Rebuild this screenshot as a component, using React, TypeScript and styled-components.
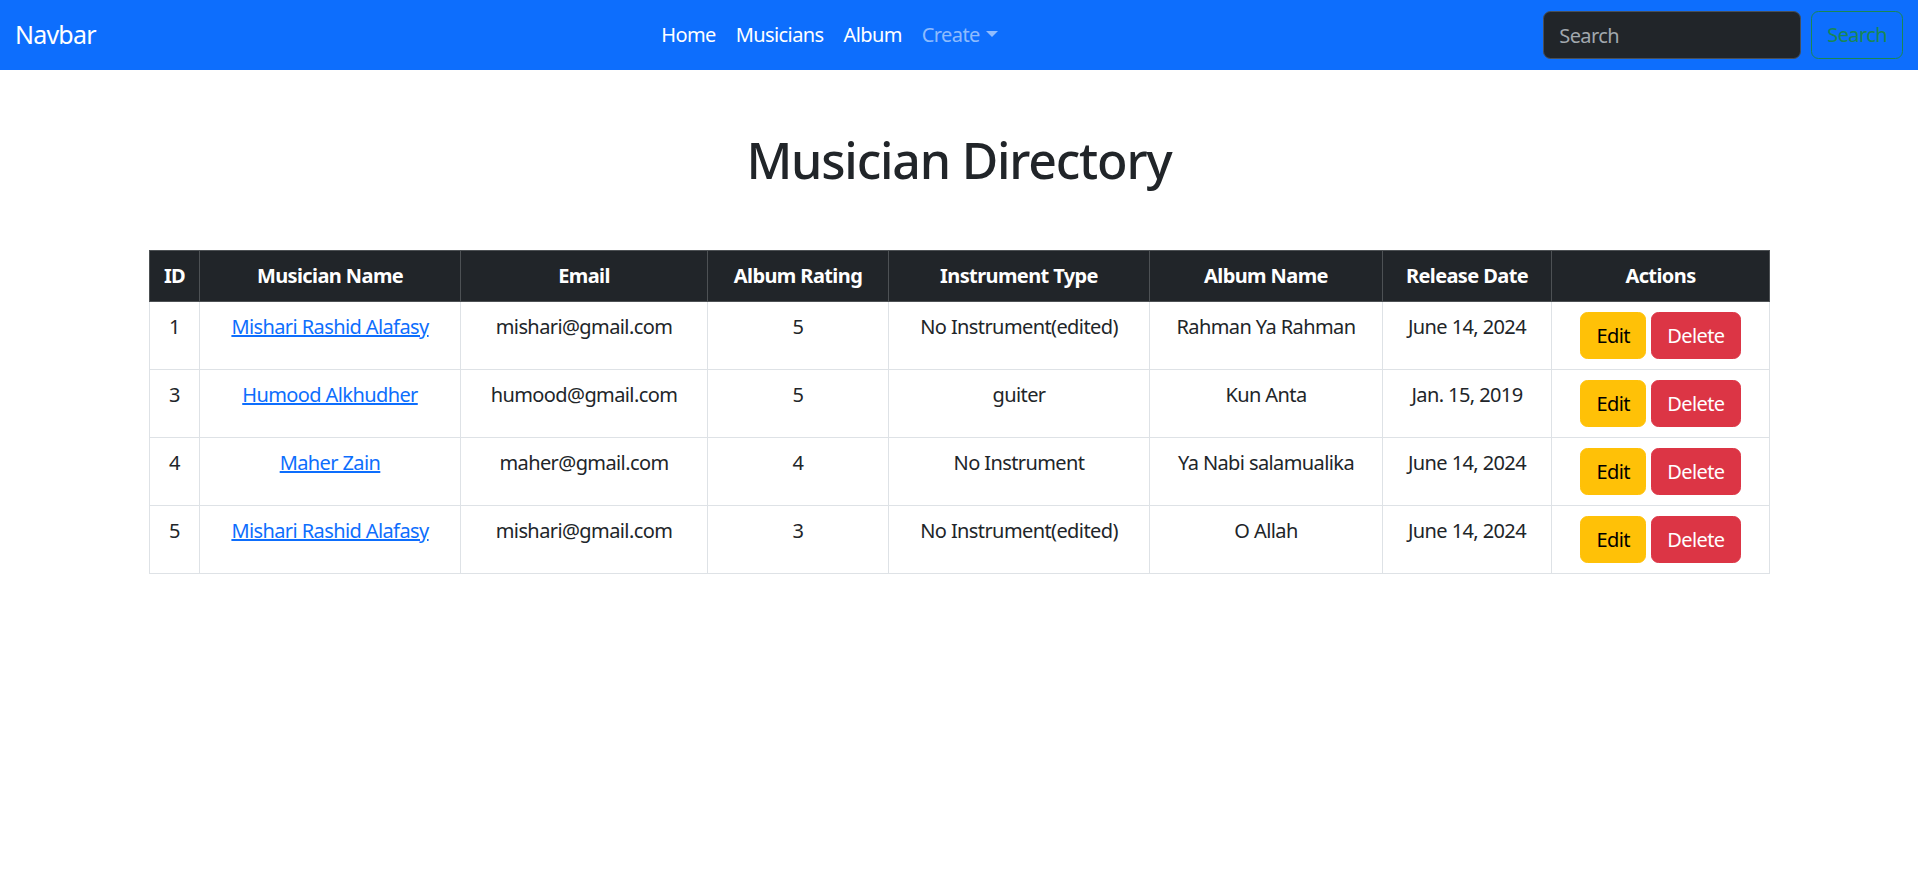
import React from "react";
import styled, { createGlobalStyle } from "styled-components";

const GlobalStyle = createGlobalStyle`
  *, *::before, *::after { box-sizing: border-box; }
  body {
    margin: 0;
    font-family: "Noto Sans", "Open Sans", sans-serif;
    font-size: 20px;
    line-height: 1.5;
    letter-spacing: -0.6px;
    color: #212529;
    background: #fff;
  }
`;

const NavBar = styled.nav`
  height: 70px;
  background: #0d6efd;
  padding: 10px 15px;
  display: flex;
  align-items: center;
`;

const Brand = styled.a`
  font-size: 25px;
  line-height: 37.5px;
  letter-spacing: -0.8px;
  color: #fff;
  text-decoration: none;
  margin-right: 20px;
`;

const NavLinks = styled.ul`
  list-style: none;
  margin: 0 auto;
  padding: 0;
  display: flex;
`;

const NavLink = styled.a<{ $muted?: boolean }>`
  display: block;
  padding: 10px;
  color: ${(p) => (p.$muted ? "rgba(255,255,255,0.55)" : "#fff")};
  text-decoration: none;
`;

const Caret = styled.span`
  display: inline-block;
  margin-left: 6px;
  vertical-align: 5px;
  border-top: 6px solid;
  border-right: 6px solid transparent;
  border-left: 6px solid transparent;
  border-bottom: 0;
`;

const SearchForm = styled.form`
  display: flex;
  gap: 10px;
`;

const SearchInput = styled.input`
  width: 258px;
  height: 47.5px;
  padding: 7.5px 15px;
  font: inherit;
  letter-spacing: inherit;
  color: #dee2e6;
  background: #212529;
  border: 1px solid #495057;
  border-radius: 7.5px;
  outline: none;
  &::placeholder { color: #a1a8ae; }
`;

const OutlineButton = styled.button`
  height: 47.5px;
  padding: 7.5px 15px;
  font: inherit;
  letter-spacing: inherit;
  color: #198754;
  background: transparent;
  border: 1px solid #198754;
  border-radius: 7.5px;
`;

const Container = styled.main`
  width: 1650px;
  max-width: 100%;
  margin: 0 auto;
  padding: 0 15px;
`;

const Title = styled.h1`
  margin: 60px 0;
  text-align: center;
  font-size: 50px;
  font-weight: 500;
  line-height: 1.2;
  letter-spacing: -1.2px;
`;

const Table = styled.table`
  width: 100%;
  border-collapse: collapse;
  table-layout: fixed;
  margin-bottom: 20px;
`;

const HeadCell = styled.th`
  padding: 10px;
  background: #212529;
  color: #fff;
  font-weight: 700;
  text-align: center;
  border: 1px solid #4d5154;
`;

const Cell = styled.td`
  padding: 10px;
  text-align: center;
  vertical-align: top;
  border: 1px solid #dee2e6;
`;

const NameLink = styled.a`
  color: #0d6efd;
  text-decoration: underline;
`;

const Actions = styled.div`
  display: flex;
  justify-content: center;
  gap: 5.5px;
`;

const ActionButton = styled.button<{ $variant: "warning" | "danger" }>`
  padding: 7.5px 15px;
  font: inherit;
  letter-spacing: inherit;
  line-height: 1.5;
  border-radius: 7.5px;
  border: 1px solid ${(p) => (p.$variant === "warning" ? "#ffc107" : "#dc3545")};
  background: ${(p) => (p.$variant === "warning" ? "#ffc107" : "#dc3545")};
  color: ${(p) => (p.$variant === "warning" ? "#000" : "#fff")};
`;

const columns = [
  { label: "ID", width: 50 },
  { label: "Musician Name", width: 261 },
  { label: "Email", width: 247 },
  { label: "Album Rating", width: 181 },
  { label: "Instrument Type", width: 261 },
  { label: "Album Name", width: 233 },
  { label: "Release Date", width: 169 },
  { label: "Actions", width: 218 },
];

const rows = [
  { id: 1, name: "Mishari Rashid Alafasy", email: "mishari@gmail.com", rating: 5, instrument: "No Instrument(edited)", album: "Rahman Ya Rahman", date: "June 14, 2024" },
  { id: 3, name: "Humood Alkhudher", email: "humood@gmail.com", rating: 5, instrument: "guiter", album: "Kun Anta", date: "Jan. 15, 2019" },
  { id: 4, name: "Maher Zain", email: "maher@gmail.com", rating: 4, instrument: "No Instrument", album: "Ya Nabi salamualika", date: "June 14, 2024" },
  { id: 5, name: "Mishari Rashid Alafasy", email: "mishari@gmail.com", rating: 3, instrument: "No Instrument(edited)", album: "O Allah", date: "June 14, 2024" },
];

export default function App() {
  return (
    <>
      <GlobalStyle />
      <NavBar>
        <Brand href="#">Navbar</Brand>
        <NavLinks>
          <li><NavLink href="#">Home</NavLink></li>
          <li><NavLink href="#">Musicians</NavLink></li>
          <li><NavLink href="#">Album</NavLink></li>
          <li><NavLink href="#" $muted>Create<Caret /></NavLink></li>
        </NavLinks>
        <SearchForm onSubmit={(e) => e.preventDefault()}>
          <SearchInput type="search" placeholder="Search" />
          <OutlineButton type="submit">Search</OutlineButton>
        </SearchForm>
      </NavBar>
      <Container>
        <Title>Musician Directory</Title>
        <Table>
          <colgroup>
            {columns.map((c) => (
              <col key={c.label} style={{ width: c.width }} />
            ))}
          </colgroup>
          <thead>
            <tr>
              {columns.map((c) => (
                <HeadCell key={c.label}>{c.label}</HeadCell>
              ))}
            </tr>
          </thead>
          <tbody>
            {rows.map((r) => (
              <tr key={r.id}>
                <Cell>{r.id}</Cell>
                <Cell><NameLink href="#">{r.name}</NameLink></Cell>
                <Cell>{r.email}</Cell>
                <Cell>{r.rating}</Cell>
                <Cell>{r.instrument}</Cell>
                <Cell>{r.album}</Cell>
                <Cell>{r.date}</Cell>
                <Cell>
                  <Actions>
                    <ActionButton $variant="warning">Edit</ActionButton>
                    <ActionButton $variant="danger">Delete</ActionButton>
                  </Actions>
                </Cell>
              </tr>
            ))}
          </tbody>
        </Table>
      </Container>
    </>
  );
}
